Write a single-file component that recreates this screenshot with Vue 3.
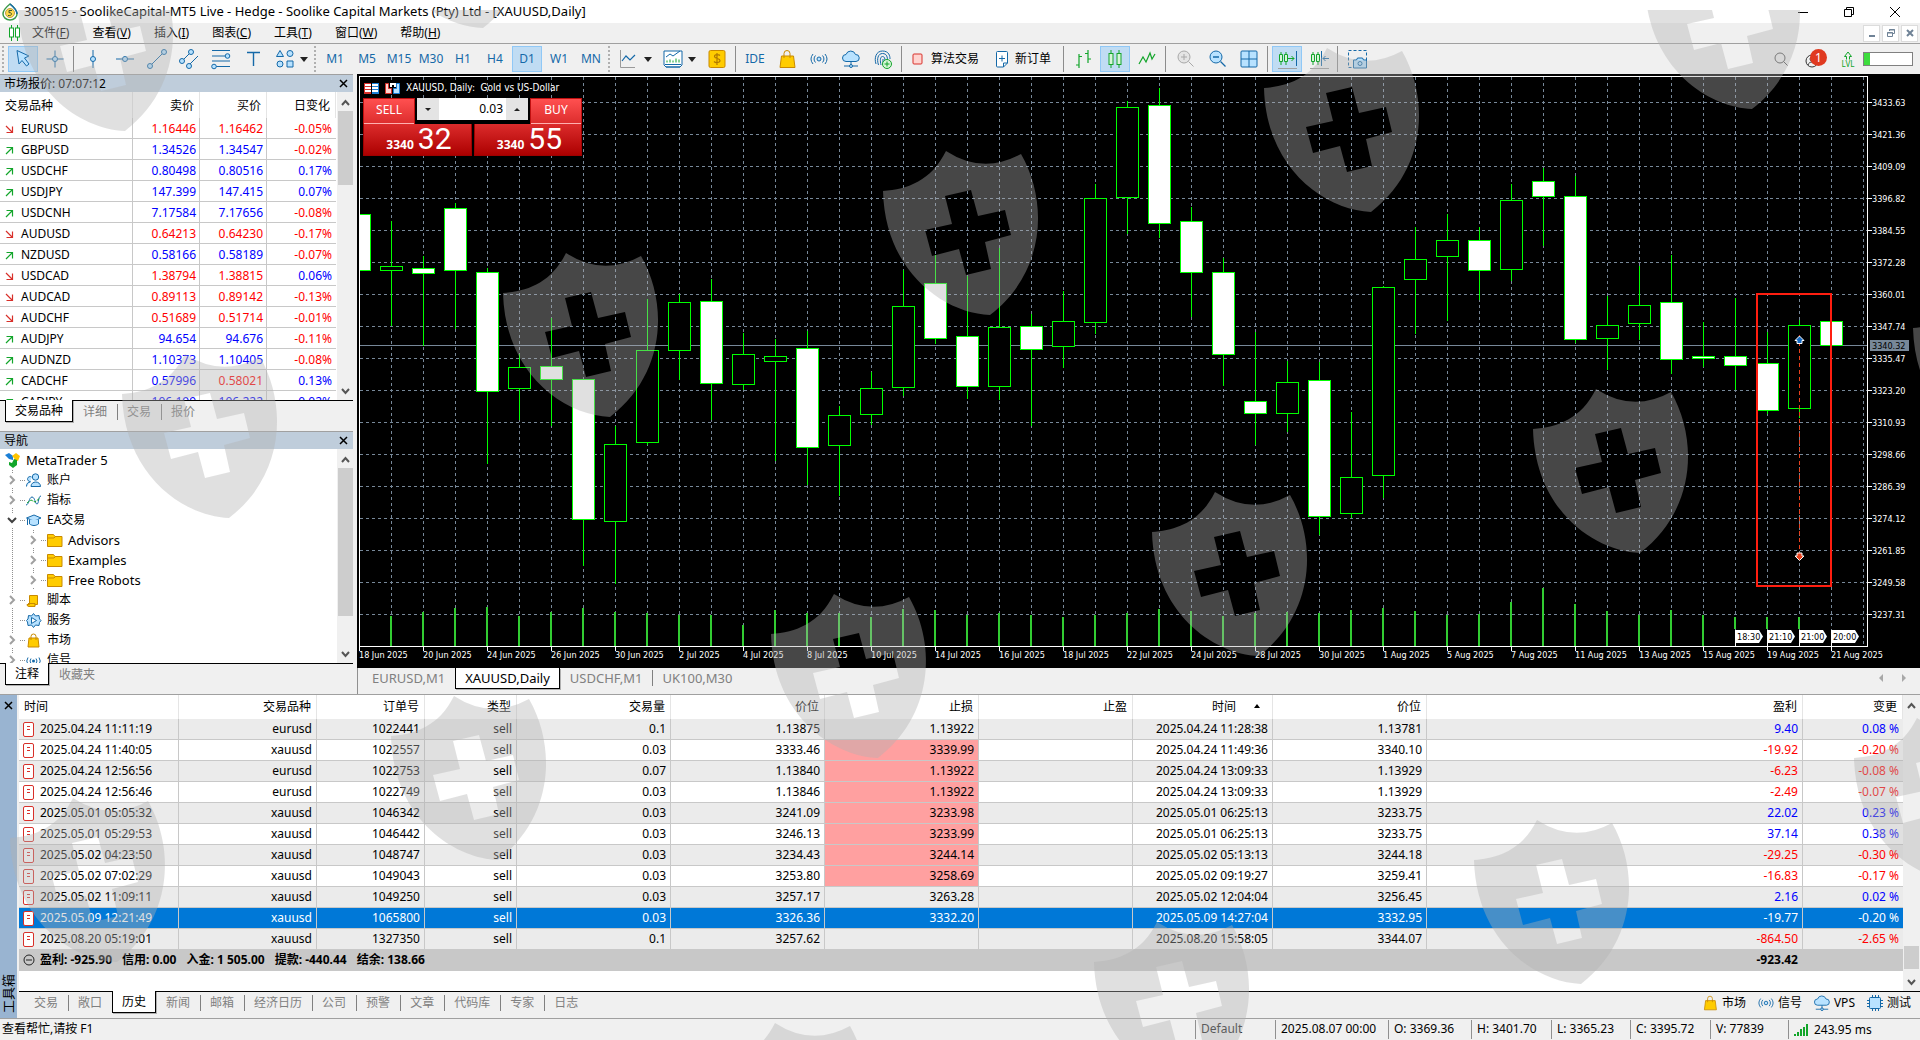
<script setup>
import { ref, computed, onMounted, onBeforeUnmount } from 'vue'

const icons = {
  cursor: '<path d="M9 6.500l12 5.500-4.500 2 4.500 6-2.500 2-4.500-5.500-3 3.500z" fill="#b8e2ff" stroke="#1569a8"/>',
  cross: '<path d="M6.500 15h17M15 6.500v17" stroke="#1569a8"/><circle cx="15" cy="15" r="2.500" fill="#b8e2ff" stroke="#1569a8"/>',
  vline: '<path d="M15 6v18" stroke="#1569a8"/><circle cx="15" cy="15" r="2.500" fill="#b8e2ff" stroke="#1569a8"/>',
  hline: '<path d="M6 15h18" stroke="#1569a8"/><circle cx="15" cy="15" r="2.500" fill="#b8e2ff" stroke="#1569a8"/>',
  trend: '<path d="M8 22L22 8" stroke="#1569a8"/><circle cx="8" cy="22" r="2.500" fill="#b8e2ff" stroke="#1569a8"/><circle cx="22" cy="8" r="2.500" fill="#b8e2ff" stroke="#1569a8"/>',
  channel: '<path d="M8 17l9-9M14 22l10-10" stroke="#1569a8"/><circle cx="8" cy="17" r="2.500" fill="#b8e2ff" stroke="#1569a8"/><circle cx="17" cy="8" r="2.500" fill="#b8e2ff" stroke="#1569a8"/><circle cx="15" cy="22" r="2.500" fill="#b8e2ff" stroke="#1569a8"/>',
  fibo: '<path d="M6 6.500h18M6 12h13M6 17h18M9 22.500h15" stroke="#1569a8"/><circle cx="21.500" cy="12" r="2.300" fill="#b8e2ff" stroke="#1569a8"/><circle cx="8" cy="22.500" r="2.300" fill="#b8e2ff" stroke="#1569a8"/>',
  text: '<path d="M9 8.500h13M15.500 8.500V22" stroke="#1569a8" stroke-width="1.400"/>',
  shapes: '<path d="M6.500 12.500l3.500-6 3.500 6z" fill="#b8e2ff" stroke="#1569a8"/><circle cx="20" cy="9.500" r="3" fill="#b8e2ff" stroke="#1569a8"/><circle cx="10" cy="20" r="3" fill="#b8e2ff" stroke="#1569a8"/><path d="M17 17h6v6h-6z" fill="#b8e2ff" stroke="#1569a8"/>',
  lineChart: '<path d="M6.500 6v17.500H21" stroke="#9a9a9a"/><path d="M8 17l4-5 4 4 5-5" stroke="#1569a8" stroke-width="1.200"/>',
  indicator: '<path d="M6 7h18v14l-2 2H8l-2-2z" fill="#fff" stroke="#1569a8"/><path d="M8 13l4-3 3 2 7-5" stroke="#1569a8"/><path d="M9 18.500v-2M12 18.500v-3M15 18.500v-2M18 18.500v-4M21 18.500v-3" stroke="#12a52a"/><path d="M7 20.500h16M8 23h14" stroke="#1569a8"/>',
  dollar: '<rect x="7" y="6.500" width="16" height="17" rx="1.500" fill="#fc0" stroke="#c98a00"/><path d="M18 11.500c-1-1-5.500-1.500-5.500 1s5.500 1.500 5.500 4-4.500 2.500-6 1M15 9v12" stroke="#b07800" stroke-width="1.200"/>',
  bag: '<path d="M9.500 12h12l1.500 11.500H8z" fill="#fc0" stroke="#c98a00"/><path d="M12 14V9.500a3 3 0 0 1 6 0V14" stroke="#c98a00"/>',
  signal: '<circle cx="15" cy="15" r="2" fill="#b8e2ff" stroke="#1569a8"/><path d="M11.500 11.500a5 5 0 0 0 0 7M18.500 11.500a5 5 0 0 1 0 7M9 10a8 8 0 0 0 0 10M21 10a8 8 0 0 1 0 10" stroke="#1569a8"/>',
  cloud: '<path d="M10 17.500a3.500 3.500 0 0 1 0-7 5 5 0 0 1 9.500 0 3.500 3.500 0 0 1 .500 7z" fill="#b8e2ff" stroke="#1569a8"/><path d="M15 17.500v4M8 22h14" stroke="#1569a8"/><circle cx="15" cy="22" r="1.500" fill="#b8e2ff" stroke="#1569a8"/>',
  finger: '<path d="M8 20c-2-6 0-13 6.500-13S22 12 22 15M10.500 21c-2-6-.500-11.500 4-11.500s5 4 5 7M13 21c-1-4-1-8.500 1.500-8.500 2 0 2.500 2 2.500 4M15 15v6" stroke="#1569a8"/><circle cx="19" cy="20" r="4.500" fill="#d8f5d8" stroke="#12a52a"/><path d="M16.500 20h5M19 17.500v5" stroke="#12a52a"/>',
  bars: '<path d="M11 10v14M8 21h3M11 12.500h3M20 6v13M17 9.500h3M20 15h3" stroke="#12a52a" stroke-width="1.200"/>',
  candles: '<path d="M11 6v18M19 6v18" stroke="#12a52a"/><rect x="9" y="9.500" width="4" height="11" fill="#d8f5d8" stroke="#12a52a"/><rect x="17" y="9.500" width="4" height="11" fill="#d8f5d8" stroke="#12a52a"/>',
  line: '<path d="M7 20l4-7 3 5 4-9 2 6 3-5" stroke="#12a52a" stroke-width="1.200"/>',
  zoomIn: '<circle cx="14" cy="13" r="6" fill="#e4e4e4" stroke="#a8a8a8"/><path d="M18.500 17.500l5 5M11 13h6M14 10v6" stroke="#a8a8a8"/>',
  zoomOut: '<circle cx="14" cy="13" r="6" fill="#b8e2ff" stroke="#1569a8"/><path d="M18.500 17.500l5 5M11 13h6" stroke="#1569a8" stroke-width="1.300"/>',
  grid: '<rect x="7" y="7" width="16" height="16" rx="1" fill="#b8e2ff" stroke="#1569a8"/><path d="M15 7v16M7 15h16" stroke="#1569a8"/>',
  shiftEnd: '<path d="M9 8v13M14 8v13" stroke="#12a52a"/><path d="M7.500 10.500h3v7h-3zM12.500 10.500h3v7h-3z" fill="#d8f5d8" stroke="#12a52a"/><path d="M16 14.500h6M19.500 12l2.500 2.500-2.500 2.500" stroke="#12a52a"/><path d="M24.500 7v15" stroke="#1569a8"/><path d="M6 24.500h19" stroke="#a0a0a0"/>',
  shiftIn: '<path d="M9 8v13M14 8v13" stroke="#12a52a"/><path d="M7.500 10.500h3v7h-3zM12.500 10.500h3v7h-3z" fill="#d8f5d8" stroke="#12a52a"/><path d="M17.500 7v15" stroke="#1569a8"/><path d="M19 14.500h6M21.500 12L19 14.500l2.500 2.500" stroke="#1569a8"/><path d="M6 24.500h19" stroke="#a0a0a0"/>',
  camera: '<path d="M6.500 6.500h18v17h-18z" stroke="#1569a8" stroke-dasharray="3 2"/><path d="M11.500 16h3l1-2h5l1 2h3v8h-13z" fill="#b8e2ff" stroke="#1569a8"/><circle cx="18" cy="19.500" r="2" stroke="#1569a8"/>'
}

const drawTools = ['cross', null, 'vline', 'hline', 'trend', 'channel', 'fibo', 'text']
const timeframes = ['M1', 'M5', 'M15', 'M30', 'H1', 'H4', 'D1', 'W1', 'MN']
const chartTools = ['bars', 'candles', 'line', null, 'zoomIn', 'zoomOut', 'grid', null, 'shiftEnd', 'shiftIn', null, 'camera']
const pressed = ['candles', 'shiftEnd']

const menus = [
  ['文件', 'F'], ['查看', 'V'], ['插入', 'I'], ['图表', 'C'],
  ['工具', 'T'], ['窗口', 'W'], ['帮助', 'H']
]

// symbol, bid, ask, daily change, direction, bid falling, ask falling
const quotes = [
  ['EURUSD', '1.16446', '1.16462', '-0.05%', 0, 1, 1],
  ['GBPUSD', '1.34526', '1.34547', '-0.02%', 1, 0, 0],
  ['USDCHF', '0.80498', '0.80516', '0.17%', 1, 0, 0],
  ['USDJPY', '147.399', '147.415', '0.07%', 1, 0, 0],
  ['USDCNH', '7.17584', '7.17656', '-0.08%', 1, 0, 0],
  ['AUDUSD', '0.64213', '0.64230', '-0.17%', 0, 1, 1],
  ['NZDUSD', '0.58166', '0.58189', '-0.07%', 1, 0, 0],
  ['USDCAD', '1.38794', '1.38815', '0.06%', 0, 1, 1],
  ['AUDCAD', '0.89113', '0.89142', '-0.13%', 0, 1, 1],
  ['AUDCHF', '0.51689', '0.51714', '-0.01%', 0, 1, 1],
  ['AUDJPY', '94.654', '94.676', '-0.11%', 1, 0, 0],
  ['AUDNZD', '1.10373', '1.10405', '-0.08%', 1, 0, 0],
  ['CADCHF', '0.57996', '0.58021', '0.13%', 1, 0, 1],
  ['CADJPY', '106.199', '106.222', '0.02%', 1, 0, 0]
]

const folder = '<path d="M.5 1.500h6l1.500 2h7v10H.5z" fill="#fc0" stroke="#c98a00"/><path d="M1 5h6l1.500-1.500" stroke="#c98a00"/>'
const tree = [
  { t: '账户', i: '<circle cx="9.500" cy="4" r="3.200" fill="#b8e2ff" stroke="#1569a8"/><path d="M5 13.500c0-6 9.500-6 9.500 0zM4.500 8.500a2.500 2.500 0 1 1 1-4.500M.5 13.500c0-3 1.500-4.500 4-4.500" fill="#b8e2ff" stroke="#1569a8"/>', s: 'closed' },
  { t: '指标', i: '<path d="M0 12c3 0 3-8 6-8s3 7 5 7 1-8 4-8" stroke="#1569a8"/><path d="M1 10l4-3 4 2 5-4" stroke="#12a52a" stroke-dasharray="3 1"/>', s: 'closed' },
  { t: 'EA交易', i: '<path d="M.5 5L8 2l7 3-7 3z" fill="#b8e2ff" stroke="#1569a8"/><path d="M3.500 6.500V11c3 2 6 2 9 0V6.500M1.500 6v6" fill="#b8e2ff" stroke="#1569a8"/>', s: 'open' },
  { t: 'Advisors', i: folder, s: 'closed', d: 1 },
  { t: 'Examples', i: folder, s: 'closed', d: 1 },
  { t: 'Free Robots', i: folder, s: 'closed', d: 1 },
  { t: '脚本', i: '<path d="M3.500 2.500h8v9H9v2H3a2 2 0 0 1-2-2h2.500z" fill="#fc0" stroke="#c98a00"/><path d="M2 10.500h7v2" stroke="#c98a00"/>', s: 'closed' },
  { t: '服务', i: '<path d="M7.500.5l2 2.500 3.500-.5.500 3.500 1.500 1.500-1.500 2-.5 3-3.500-.5-2 2.500-2-2.500-3.500.5-.5-3.500L.5 7.500 2 6l.5-3.500L5.500 3z" fill="#b8e2ff" stroke="#1569a8"/><path d="M5.500 4.500l5 3-5 3z" fill="#fff" stroke="#1569a8"/>', s: 'leaf' },
  { t: '市场', i: '<path d="M3 5h9l1 9H2z" fill="#fc0" stroke="#c98a00"/><path d="M5 7V3.500a2.500 2.500 0 0 1 5 0V7" stroke="#c98a00"/>', s: 'closed' },
  { t: '信号', i: '<circle cx="7.500" cy="8" r="1.500" fill="#1569a8"/><path d="M5 5.500a4 4 0 0 0 0 5M10 5.500a4 4 0 0 1 0 5M2 4.500a6 6 0 0 0 0 7M13 4.500a6 6 0 0 1 0 7" stroke="#1569a8"/>', s: 'closed' }
]

const chartTabs = ['EURUSD,M1', 'XAUUSD,Daily', 'USDCHF,M1', 'UK100,M30']

// body top, body bottom, high, low, bearish, volume top
const bars = [
  [214, 270, 214, 270, 1, 0], [266, 270, 221, 326, 0, 616], [268, 273, 256, 346, 1, 612], [208, 270, 203, 329, 1, 608],
  [272, 391, 268, 464, 1, 607], [367, 388, 354, 420, 0, 616], [366, 379, 318, 426, 1, 612], [379, 519, 379, 566, 1, 608],
  [444, 521, 426, 584, 0, 612], [350, 442, 299, 445, 0, 613], [302, 350, 294, 380, 0, 615], [301, 383, 279, 420, 1, 615],
  [354, 384, 333, 390, 0, 625], [356, 361, 339, 461, 0, 610], [348, 447, 331, 485, 1, 613], [415, 445, 406, 496, 0, 613],
  [388, 414, 372, 425, 0, 617], [306, 387, 270, 396, 0, 609], [283, 338, 255, 344, 1, 610], [336, 386, 276, 399, 1, 615],
  [327, 386, 248, 400, 0, 613], [326, 349, 314, 426, 1, 615], [321, 346, 291, 368, 0, 617], [198, 322, 184, 334, 0, 615],
  [107, 197, 101, 234, 0, 613], [105, 223, 88, 238, 1, 609], [221, 272, 207, 317, 1, 611], [272, 354, 258, 386, 1, 616],
  [401, 413, 332, 445, 1, 613], [382, 413, 361, 432, 0, 612], [380, 516, 362, 535, 1, 613], [477, 513, 412, 518, 0, 610],
  [287, 475, 286, 498, 0, 608], [259, 279, 227, 334, 0, 611], [240, 256, 214, 321, 0, 615], [240, 270, 227, 300, 1, 614],
  [200, 269, 184, 281, 0, 602], [181, 196, 168, 246, 1, 588], [196, 339, 176, 343, 1, 604], [325, 338, 296, 370, 0, 611],
  [305, 323, 266, 340, 0, 615], [302, 359, 255, 374, 1, 610], [356, 358, 322, 367, 1, 615], [356, 365, 298, 390, 1, 617],
  [363, 410, 332, 414, 1, 617], [325, 408, 320, 418, 0, 617], [321, 345, 321, 345, 1, 0]
]
const dates = ['18 Jun', '20 Jun', '24 Jun', '26 Jun', '30 Jun', '2 Jul', '4 Jul', '8 Jul', '10 Jul', '14 Jul', '16 Jul', '18 Jul',
  '22 Jul', '24 Jul', '28 Jul', '30 Jul', '1 Aug', '5 Aug', '7 Aug', '11 Aug', '13 Aug', '15 Aug', '19 Aug', '21 Aug']
const prices = Array.from({ length: 17 }, (_, k) => (3433.63 - 12.27 * k).toFixed(2))
const events = ['18:30', '21:10', '21:00', '20:00']

const chartBox = ref(null)
const chartWidth = ref(1563)
const axisX = computed(() => chartWidth.value - 53)
const barX = (k) => chartWidth.value - 89 - 32 * (bars.length - 1 - k)
let observer
onMounted(() => {
  chartWidth.value = chartBox.value.clientWidth
  observer = new ResizeObserver(() => { chartWidth.value = chartBox.value.clientWidth })
  observer.observe(chartBox.value)
})
onBeforeUnmount(() => observer.disconnect())

const columns = ['时间', '交易品种', '订单号', '类型', '交易量', '价位', '止损', '止盈', '时间', '价位', '盈利', '变更']
const deals = [
  ['2025.04.24 11:11:19', 'eurusd', '1022441', 'sell', '0.1', '1.13875', '1.13922', '', '2025.04.24 11:28:38', '1.13781', '9.40', '0.08 %'],
  ['2025.04.24 11:40:05', 'xauusd', '1022557', 'sell', '0.03', '3333.46', '3339.99', '', '2025.04.24 11:49:36', '3340.10', '-19.92', '-0.20 %', 1],
  ['2025.04.24 12:56:56', 'eurusd', '1022753', 'sell', '0.07', '1.13840', '1.13922', '', '2025.04.24 13:09:33', '1.13929', '-6.23', '-0.08 %', 1],
  ['2025.04.24 12:56:46', 'eurusd', '1022749', 'sell', '0.03', '1.13846', '1.13922', '', '2025.04.24 13:09:33', '1.13929', '-2.49', '-0.07 %', 1],
  ['2025.05.01 05:05:32', 'xauusd', '1046342', 'sell', '0.03', '3241.09', '3233.98', '', '2025.05.01 06:25:13', '3233.75', '22.02', '0.23 %', 1],
  ['2025.05.01 05:29:53', 'xauusd', '1046442', 'sell', '0.03', '3246.13', '3233.99', '', '2025.05.01 06:25:13', '3233.75', '37.14', '0.38 %', 1],
  ['2025.05.02 04:23:50', 'xauusd', '1048747', 'sell', '0.03', '3234.43', '3244.14', '', '2025.05.02 05:13:13', '3244.18', '-29.25', '-0.30 %', 1],
  ['2025.05.02 07:02:29', 'xauusd', '1049043', 'sell', '0.03', '3253.80', '3258.69', '', '2025.05.02 09:19:27', '3259.41', '-16.83', '-0.17 %', 1],
  ['2025.05.02 11:09:11', 'xauusd', '1049250', 'sell', '0.03', '3257.17', '3263.28', '', '2025.05.02 12:04:04', '3256.45', '2.16', '0.02 %'],
  ['2025.05.09 12:21:49', 'xauusd', '1065800', 'sell', '0.03', '3326.36', '3332.20', '', '2025.05.09 14:27:04', '3332.95', '-19.77', '-0.20 %'],
  ['2025.08.20 05:19:01', 'xauusd', '1327350', 'sell', '0.1', '3257.62', '', '', '2025.08.20 15:58:05', '3344.07', '-864.50', '-2.65 %']
]
const selectedDeal = 9
const toolTabs = ['交易', '敞口', '历史', '新闻', '邮箱', '经济日历', '公司', '预警', '文章', '代码库', '专家', '日志']
const statusCells = ['2025.08.07 00:00', 'O: 3369.36', 'H: 3401.70', 'L: 3365.23', 'C: 3395.72', 'V: 77839']

const shields = [
  [18, -33], [376, -136], [1645, -55], [503, 253], [883, 151], [1264, 48], [1533, 389], [1152, 492], [771, 594],
  [122, 354], [391, 696], [10, 798], [1474, 820], [1854, 718], [1094, 922], [712, 1023], [1913, 288]
]
</script>

<template>
  <div class="app">
    <header class="title-bar">
      <svg class="logo" width="16" height="18" fill="none">
        <path d="M8 1c5 4 7 8 7 10 0 3-3 6-7 6s-7-3-7-6c0-2 2-6 7-10z" fill="#fff" stroke="#3b9a4a" stroke-width="1.500" />
        <path d="M8 1c5 4 7 8 7 10" stroke="#1569a8" stroke-width="1.500" />
        <circle cx="8" cy="10" r="4.500" fill="#ffd84a" stroke="#b9a04a" />
        <path d="M10 7.500H7v2.200c3-.700 3.500 2.800.500 2.800H6" stroke="#3d5a30" />
      </svg>
      <h1>300515 - SoolikeCapital-MT5 Live - Hedge - Soolike Capital Markets (Pty) Ltd - [XAUUSD,Daily]</h1>
      <div class="window-buttons">
        <button aria-label="最小化"><svg width="12" height="12"><path d="M1 6.500h10" stroke="#000" /></svg></button>
        <button aria-label="还原"><svg width="12" height="12" fill="none" stroke="#000"><path d="M1.500 3.500h7v7h-7zM3.500 3.500v-2h7v7h-2" /></svg></button>
        <button aria-label="关闭"><svg width="12" height="12" stroke="#000"><path d="M1 1l10 10M11 1L1 11" /></svg></button>
      </div>
    </header>

    <nav class="menu-bar">
      <svg class="menu-icon" width="12" height="16" fill="#fff" stroke="#12a52a">
        <path d="M3.500 0v16M9.500 0v16" /><rect x="1.500" y="3" width="4" height="9" /><rect x="7.500" y="3" width="4" height="9" />
      </svg>
      <button v-for="m in menus" :key="m[1]">{{ m[0] }}(<u>{{ m[1] }}</u>)</button>
      <div class="mdi-buttons">
        <button aria-label="最小化图表"><svg width="12" height="12"><path d="M3 9h6" stroke="#6f8296" stroke-width="2" /></svg></button>
        <button aria-label="还原图表"><svg width="12" height="12" fill="none" stroke="#6f8296"><path d="M2.500 5.500h5v4h-5zM2 6h6M4.500 4V2.500h5v4H8M4 3h6" /></svg></button>
        <button aria-label="关闭图表"><svg width="12" height="12" stroke="#6f8296" stroke-width="2"><path d="M3 3l6 6M9 3l-6 6" /></svg></button>
      </div>
    </nav>

    <div class="toolbar">
      <i class="grip"></i>
      <button class="tool on" aria-label="光标"><svg width="30" height="30" fill="none" v-html="icons.cursor"></svg></button>
      <template v-for="(t, k) in drawTools" :key="k">
        <button v-if="t" class="tool" :aria-label="t"><svg width="30" height="30" fill="none" v-html="icons[t]"></svg></button>
        <i v-else class="sep"></i>
      </template>
      <button class="tool drop" aria-label="图形"><svg width="30" height="30" fill="none" v-html="icons.shapes"></svg><i class="caret"></i></button>
      <i class="grip"></i>
      <button v-for="t in timeframes" :key="t" class="tool" :class="{ on: t === 'D1' }">{{ t }}</button>
      <i class="grip"></i>
      <button class="tool drop" aria-label="图表类型"><svg width="30" height="30" fill="none" v-html="icons.lineChart"></svg><i class="caret"></i></button>
      <button class="tool drop" aria-label="指标"><svg width="30" height="30" fill="none" v-html="icons.indicator"></svg><i class="caret"></i></button>
      <button class="tool" aria-label="账户"><svg width="30" height="30" fill="none" v-html="icons.dollar"></svg></button>
      <i class="sep"></i>
      <button class="tool">IDE</button>
      <button v-for="t in ['bag', 'signal', 'cloud', 'finger']" :key="t" class="tool" :aria-label="t"><svg width="30" height="30" fill="none" v-html="icons[t]"></svg></button>
      <i class="sep"></i>
      <button class="tool label algo">
        <svg width="12" height="14"><rect x="1" y="2" width="9" height="10" rx="1" fill="#ffd4d0" stroke="#d8302a" /></svg>算法交易
      </button>
      <button class="tool label order">
        <svg width="14" height="18" fill="#fff" stroke="#1569a8"><path d="M1.500 2.500a1 1 0 0 1 1-1h9a1 1 0 0 1 1 1V13l-4 4h-6a1 1 0 0 1-1-1zM8.500 17v-4h4M4 8.500h6M7 5.500v6" /></svg>新订单
      </button>
      <i class="sep"></i>
      <template v-for="(t, k) in chartTools" :key="k">
        <button v-if="t" class="tool" :class="{ on: pressed.includes(t) }" :aria-label="t"><svg width="30" height="30" fill="none" v-html="icons[t]"></svg></button>
        <i v-else class="sep"></i>
      </template>
      <div class="toolbar-right">
        <button class="plain" aria-label="搜索"><svg width="14" height="14" fill="none" stroke="#555"><circle cx="6" cy="6" r="5" /><path d="M9.500 9.500l4 4" /></svg></button>
        <button class="plain account" aria-label="账户">
          <svg width="24" height="20" fill="none"><circle cx="8" cy="12" r="6" stroke="#333" /><circle cx="8" cy="10" r="2" stroke="#333" /><path d="M4 16c1-4 7-4 8 0" stroke="#333" /></svg>
          <span class="badge">1</span>
        </button>
        <button class="plain lvl" aria-label="等级">
          <svg width="12" height="9" fill="none" stroke="#12a52a"><path d="M4.500 8.500v-3H2.500L6 1l3.500 4.500h-2v3" /></svg>LVL
        </button>
        <div class="battery"><span></span></div>
      </div>
    </div>

    <main class="work">
      <aside class="side">
        <section class="panel market">
          <header class="panel-title">市场报价: 07:07:12<button aria-label="关闭市场报价">
            <svg width="9" height="9" stroke="#000" stroke-width="1.500"><path d="M1 1l7 7M8 1L1 8" /></svg></button></header>
          <div class="scroll-area">
            <table class="quotes">
              <colgroup><col><col class="c67"><col class="c67"><col class="c69"></colgroup>
              <thead><tr><th>交易品种</th><th>卖价</th><th>买价</th><th>日变化</th></tr></thead>
              <tbody>
                <tr v-for="q in quotes" :key="q[0]">
                  <td>
                    <svg v-if="q[4]" width="9" height="9" fill="none" stroke="#12a52a" stroke-width="1.200"><path d="M1 8l6.500-6.500M1.500 1.500h6v6" /></svg>
                    <svg v-else width="9" height="9" fill="none" stroke="#d8302a" stroke-width="1.200"><path d="M1 1l6.500 6.500M1.500 7.500h6v-6" /></svg>{{ q[0] }}
                  </td>
                  <td :class="q[5] ? 'red' : 'blue'">{{ q[1] }}</td>
                  <td :class="q[6] ? 'red' : 'blue'">{{ q[2] }}</td>
                  <td :class="q[3][0] === '-' ? 'red' : 'blue'">{{ q[3] }}</td>
                </tr>
              </tbody>
            </table>
            <div class="scrollbar">
              <svg width="11" height="8" fill="none" stroke="#555" stroke-width="2"><path d="M2 6l3.500-4L9 6" /></svg>
              <span class="thumb thumb-quotes"></span>
              <svg class="down" width="11" height="8" fill="none" stroke="#555" stroke-width="2"><path d="M2 2l3.500 4L9 2" /></svg>
            </div>
          </div>
          <div class="tabs"><button class="active">交易品种</button><button>详细</button><button>交易</button><button>报价</button></div>
        </section>

        <section class="panel navigator">
          <header class="panel-title">导航<button aria-label="关闭导航">
            <svg width="9" height="9" stroke="#000" stroke-width="1.500"><path d="M1 1l7 7M8 1L1 8" /></svg></button></header>
          <div class="scroll-area">
            <ul class="tree">
              <li class="root">
                <svg width="15" height="15"><path d="M0 2l4-2 4 3v4L4 6z" fill="#1b7fd6" /><path d="M7 3l4-3 4 3-2 5-3-1-1-2z" fill="#ffc400" /><path d="M9 6l3 1v5l-4 3-4-3V9l3 1z" fill="#12a52a" /></svg>MetaTrader 5
              </li>
              <li v-for="n in tree" :key="n.t" :class="{ child: n.d }">
                <i v-if="n.d" class="rail"></i>
                <span class="toggle">
                  <svg v-if="n.s === 'closed'" width="10" height="10" fill="none" stroke="#a0a0a0" stroke-width="2"><path d="M3 1l4 4-4 4" /></svg>
                  <svg v-if="n.s === 'open'" width="10" height="10" fill="none" stroke="#404040" stroke-width="2"><path d="M1 3l4 4 4-4" /></svg>
                </span>
                <i class="dots"></i>
                <svg width="16" height="15" fill="none" v-html="n.i"></svg>{{ n.t }}
              </li>
            </ul>
            <div class="scrollbar">
              <svg width="11" height="8" fill="none" stroke="#555" stroke-width="2"><path d="M2 6l3.500-4L9 6" /></svg>
              <span class="thumb thumb-tree"></span>
              <svg class="down" width="11" height="8" fill="none" stroke="#555" stroke-width="2"><path d="M2 2l3.500 4L9 2" /></svg>
            </div>
          </div>
          <div class="tabs"><button class="active">注释</button><button>收藏夹</button></div>
        </section>
      </aside>

      <section class="chart-column">
        <div ref="chartBox" class="chart">
          <svg class="plot" height="594">
            <g transform="translate(0 -74)" shape-rendering="crispEdges">
              <g class="grid">
                <line v-for="(p, k) in prices" :key="p" x1="3" :x2="axisX" :y1="102.5 + 32 * k" :y2="102.5 + 32 * k" />
                <line v-for="k in bars.length" :key="k" :x1="barX(k) + .5" :x2="barX(k) + .5" y1="77" y2="646" />
              </g>
              <line x1="2" :x2="axisX" y1="345.5" y2="345.5" stroke="#778899" />
              <g v-for="(b, k) in bars" :key="k">
                <rect v-if="b[5]" class="volume" :x="barX(k) - 1" :y="b[5]" width="2" :height="(k > 42 ? 629 : 646) - b[5]" />
                <line class="wick" :x1="barX(k) + .5" :x2="barX(k) + .5" :y1="b[2]" :y2="b[3]" />
                <rect class="body" :class="{ bear: b[4] }" :x="barX(k) - 10.5" :y="b[0] + .5" width="22" :height="b[1] - b[0]" />
              </g>
              <rect x="0" y="74" width="2" height="594" fill="#000" />
              <path class="frame" :d="`M2.500 646V76.500H${axisX + .5}V646.500H2.500`" />
              <g v-for="(p, k) in prices" :key="'p' + p">
                <line class="tick" :x1="axisX" :x2="axisX + 5" :y1="102.5 + 32 * k" :y2="102.5 + 32 * k" />
              </g>
              <line v-for="(d, k) in dates" :key="d" class="tick" :x1="barX(2 * k) + .5" :x2="barX(2 * k) + .5" y1="646" y2="651" />
            </g>
            <g transform="translate(0 -74)">
              <text v-for="(p, k) in prices" :key="p" :x="axisX + 5" :y="106 + 32 * k">{{ p }}</text>
              <text v-for="(d, k) in dates" :key="d" :x="barX(2 * k)" y="658">{{ d }} 2025</text>
              <rect :x="axisX + 3" y="340" width="39" height="11" fill="#778899" />
              <text class="dark" :x="axisX + 5" y="349">3340.32</text>
              <g v-for="(e, k) in events" :key="e">
                <path :d="`M${barX(43 + k)} 630h24l4 6.500-4 6.500h-23v4h-1z`" fill="#fff" />
                <text class="dark" :x="barX(43 + k) + 2" y="640">{{ e }}</text>
              </g>
              <rect :x="barX(46) - 74" y="294" width="74" height="292" fill="none" stroke="#ff1e10" stroke-width="2" />
              <line :x1="barX(45) + .5" :x2="barX(45) + .5" y1="335" y2="556" stroke="#e8401c" stroke-dasharray="4 3" />
              <path :d="`M${barX(45) + .5} 336l4.500 4.500h-2v3h-5v-3h-2z`" fill="#1569c0" stroke="#fff" />
              <path :d="`M${barX(45) + .5} 560.500l-4.500-4.500h2v-3h5v3h2z`" fill="#e8401c" stroke="#fff" />
            </g>
          </svg>
          <div class="overlay">
            <div class="chart-title">
              <svg width="15" height="11"><path d="M0 0h7v11H0z" fill="#d8302a" /><path d="M8 0h7v11H8z" fill="#1b7fd6" /><path d="M1 2h6M1 5h6M1 8h6M8 2h6M8 5h6M8 8h6" stroke="#fff" stroke-width="2" /></svg>
              <svg width="15" height="11"><path d="M.5.500h3v5h3v5h-6z" fill="#ffd4d0" stroke="#d8302a" /><path d="M14.500.500h-3v5h-3v5h6z" fill="#b8e2ff" stroke="#1b7fd6" /><path d="M5 0h6v4H9V2H7v2H5z" fill="#fff" /></svg>
              <span>XAUUSD, Daily:&nbsp; Gold vs US-Dollar</span>
            </div>
            <div class="one-click">
              <button class="side-button">SELL</button>
              <div class="stepper">
                <button aria-label="减少"><i class="caret small"></i></button>
                <input aria-label="交易量" value="0.03">
                <button aria-label="增加"><i class="caret small up"></i></button>
              </div>
              <button class="side-button">BUY</button>
            </div>
            <div class="quote-row">
              <div><b>3340</b><span>32</span></div>
              <div><b>3340</b><span>55</span></div>
            </div>
          </div>
        </div>
        <div class="tabs chart-tabs">
          <button v-for="t in chartTabs" :key="t" :class="{ active: t === 'XAUUSD,Daily' }">{{ t }}</button>
          <div class="tab-arrows">
            <svg width="6" height="8" fill="#a8a8a8"><path d="M5 0v8L1 4z" /></svg>
            <svg width="6" height="8" fill="#a8a8a8"><path d="M1 0v8l4-4z" /></svg>
          </div>
        </div>
      </section>
    </main>

    <section class="toolbox">
      <div class="strip">
        <button aria-label="关闭工具箱"><svg width="9" height="9" stroke="#000" stroke-width="1.500"><path d="M1 1l7 7M8 1L1 8" /></svg></button>
        <span>工具箱</span>
      </div>
      <div class="toolbox-main">
        <div class="deals-area">
          <table class="deals">
            <colgroup>
              <col class="w160"><col class="w138"><col class="w108"><col class="w92"><col class="w154"><col class="w154">
              <col class="w154"><col class="w154"><col class="w140"><col class="w154"><col><col class="w100">
            </colgroup>
            <thead><tr><th v-for="(c, k) in columns" :key="k" :class="{ sorted: k === 8 }">{{ c }}</th></tr></thead>
            <tbody>
              <tr v-for="(d, r) in deals" :key="r" :class="{ selected: r === selectedDeal }">
                <td v-for="k in 12" :key="k" :class="{ stop: k === 7 && d[12], red: k > 10 && d[k - 1][0] === '-', blue: k > 10 && d[k - 1][0] !== '-' }">
                  <svg v-if="k === 1" width="11" height="15" fill="#fff" stroke="#d8302a"><rect x=".5" y=".5" width="10" height="14" rx="1.500" /><path d="M4 4.500h3M4 7.500h3" /></svg>{{ d[k - 1] }}
                </td>
              </tr>
            </tbody>
            <tfoot>
              <tr>
                <td colspan="10">
                  <svg width="12" height="12" fill="none" stroke="#222"><circle cx="6" cy="6" r="5" /><path d="M3 6h6" /></svg><span>盈利: -925.90</span><span>信用: 0.00</span><span>入金: 1 505.00</span><span>提款: -440.44</span><span>结余: 138.66</span>
                </td>
                <td>-923.42</td><td></td>
              </tr>
            </tfoot>
          </table>
          <div class="scrollbar wide">
            <svg width="11" height="8" fill="none" stroke="#555" stroke-width="2"><path d="M2 6l3.500-4L9 6" /></svg>
            <span class="thumb thumb-deals"></span>
            <svg class="down" width="11" height="8" fill="none" stroke="#555" stroke-width="2"><path d="M2 2l3.500 4L9 2" /></svg>
          </div>
        </div>
        <div class="tabs tool-tabs">
          <button v-for="t in toolTabs" :key="t" :class="{ active: t === '历史' }">{{ t }}</button>
          <div class="links">
            <a href="#market"><svg width="16" height="16" viewBox="5 5 20 20" fill="none" v-html="icons.bag"></svg>市场</a>
            <a href="#signals"><svg width="16" height="16" viewBox="6 6 18 18" fill="none" v-html="icons.signal"></svg>信号</a>
            <a href="#vps"><svg width="16" height="16" viewBox="6 6 18 18" fill="none" v-html="icons.cloud"></svg>VPS</a>
            <a href="#tester"><svg width="16" height="16" fill="#b8e2ff" stroke="#1569a8"><path d="M5.500 0v16M8.500 0v16M11.500 0v16M0 5.500h16M0 8.500h16M0 11.500h16" /><rect x="2.500" y="2.500" width="11" height="11" rx="1" /></svg>测试</a>
          </div>
        </div>
      </div>
    </section>

    <footer class="status">
      <span class="hint">查看帮忙,请按 F1</span>
      <span class="cell profile">Default</span>
      <span v-for="(s, k) in statusCells" :key="s" class="cell" :class="'s' + k">{{ s }}</span>
      <span class="cell ping">
        <svg width="14" height="12" stroke="#12a52a" stroke-width="2"><path d="M1 12v-2M4 12V8M7 12V5M10 12V3M13 12V0" /></svg>243.95 ms
      </span>
    </footer>

    <svg class="watermark" aria-hidden="true">
      <defs>
        <path id="shield" fill-rule="evenodd" d="M63 0Q100 24 138 3C166 52 162 122 107 164 60 162 2 120 0 40 25 38 48 30 63 0zM62 45l7 28-27 6 7 26 27-7 7 26 25-6-6-27 26-7-6-25-27 6-7-26z" />
      </defs>
      <use v-for="(s, k) in shields" :key="k" href="#shield" :x="s[0]" :y="s[1] - 10" />
    </svg>
  </div>
</template>

<style>
body { background: #f0f0f0; }
</style>

<style scoped>
.app {
  position: relative;
  display: flex;
  flex-direction: column;
  height: 100vh;
  min-height: 900px;
  overflow: hidden;
  background: #f0f0f0;
  color: #000;
  font: 12px/20px "Noto Sans", "Noto Sans CJK SC", sans-serif;
}
* { box-sizing: border-box; }
svg { display: block; flex: none; }
button {
  margin: 0;
  padding: 0;
  border: 0;
  background: none;
  color: inherit;
  font: inherit;
  white-space: nowrap;
}
.red { color: #f00; }
.blue { color: #00f; }

.title-bar { display: flex; align-items: center; flex: none; height: 23px; padding-left: 2px; background: #fff; }
.title-bar h1 { margin: 0 0 2px 6px; font-size: 13px; font-weight: 400; line-height: 18px; white-space: nowrap; }
.window-buttons { display: flex; margin-left: auto; padding-right: 2px; }
.window-buttons button { display: grid; place-items: center; width: 46px; height: 20px; }

.menu-bar { display: flex; align-items: center; gap: 1px; flex: none; height: 21px; padding: 0 2px 0 8px; border-bottom: 1px solid #a0a0a0; }
.menu-bar > button { padding: 0 11px; }
.mdi-buttons { display: flex; gap: 2px; margin-left: auto; }
.mdi-buttons button { display: grid; place-items: center; width: 17px; height: 17px; border: 1px solid #dcdcdc; background: #fff; }

.toolbar { display: flex; align-items: center; gap: 2px; flex: none; height: 30px; padding: 0 7px 0 2px; color: #1569a8; }
.tool { display: flex; align-items: center; justify-content: center; flex: none; width: 30px; height: 26px; }
.tool.on { background: #c0dcf3; box-shadow: inset 0 0 0 1px #90c8f6; }
.tool.drop { justify-content: flex-start; width: 42px; }
.tool.label { justify-content: flex-start; color: #000; }
.algo { width: 82px; gap: 7px; padding-left: 6px; }
.order { width: 70px; gap: 6px; padding-left: 5px; }
.caret { border: 4px solid transparent; border-top: 5px solid #222; border-bottom: 0; }
.caret.small { border-width: 3px; border-top-width: 3px; border-bottom: 0; }
.caret.small.up { border-top: 0; border-bottom: 3px solid #222; }
.grip { flex: none; width: 4px; height: 26px; background: repeating-linear-gradient(#b0b0b0 0 2px, transparent 2px 4px) 0 0 / 2px 100% no-repeat; }
.sep { flex: none; width: 4px; height: 26px; background: linear-gradient(#8c8c8c, #8c8c8c) 1px 0 / 1px 100% no-repeat; }
.toolbar-right { display: flex; align-items: center; margin-left: auto; }
.plain { display: block; }
.account { position: relative; margin-left: 16px; }
.badge { position: absolute; top: 0; right: 1px; width: 17px; height: 17px; border-radius: 9px; background: #e03a20; color: #fff; line-height: 17px; text-align: center; }
.lvl { display: flex; flex-direction: column; align-items: center; width: 20px; margin-left: 10px; color: #12a52a; font-size: 8px; line-height: 8px; }
.battery { width: 50px; height: 14px; margin-left: 5px; border: 1px solid #808080; background: #fff; }
.battery span { display: block; width: 6px; height: 12px; background: #3ddc3d; }

.work { display: flex; gap: 4px; flex: 1 1 0; min-height: 0; }
.side { display: flex; flex-direction: column; flex: none; width: 353px; }
.panel { display: flex; flex-direction: column; min-height: 0; }
.market { flex: 357 1 0; }
.navigator { flex: 263 1 0; }
.panel-title { display: flex; align-items: center; justify-content: space-between; flex: none; height: 18px; padding: 0 5px 0 4px; border-top: 1px solid #a0a0a0; background: #bfcddb; }
.scroll-area { display: flex; flex: 1 1 0; min-height: 0; overflow: hidden; background: #fff; }
.scrollbar { display: flex; flex-direction: column; align-items: center; flex: none; width: 16px; margin-left: 1px; padding: 7px 0 5px; background: #f0f0f0; }
.scrollbar .down { margin-top: auto; }
.thumb { width: 15px; background: #cdcdcd; }
.thumb-quotes { height: 74px; margin-top: 4px; }
.thumb-tree { height: 148px; margin-top: 4px; }
.scrollbar.wide { width: 17px; margin-left: 0; }
.thumb-deals { height: 23px; margin-top: 236px; }

table { width: 100%; border-collapse: separate; border-spacing: 0; table-layout: fixed; }
.quotes { flex: 1; align-self: flex-start; }
.c67 { width: 67px; }
.c69 { width: 69px; }
th { font-weight: 400; text-align: right; white-space: nowrap; }
td { padding: 0 4px; border-right: 1px solid #c8c8c8; border-bottom: 1px solid #c8c8c8; line-height: 20px; text-align: right; white-space: nowrap; }
th { border-right: 1px solid #e5e5e5; }
.quotes th { height: 26px; padding: 2px 5px 0; }
.quotes td { padding: 2px 3px 0; line-height: 18px; }
.quotes th:first-child { text-align: left; }
.quotes td:first-child { display: flex; align-items: center; gap: 7px; padding-left: 5px; }
.quotes td:last-child { padding-right: 4px; border-right: 0; }

.tabs { display: flex; align-items: flex-start; flex: none; height: 31px; padding-left: 5px; border-top: 1px solid #000; color: #808080; }
.tabs button { height: 16px; margin-top: 3px; padding: 0 10px; line-height: 14px; }
.tabs button:not(.active) + button:not(.active) { padding-left: 9px; border-left: 1px solid #808080; }
.tabs .active { height: 22px; margin-top: -1px; padding: 0 9px; border: 1px solid #000; border-top: 0; background: #fff; box-shadow: 1px 1px 0 #b0b0b0; color: #000; line-height: 20px; }

.tree { flex: 1; margin: 0; padding: 1px 0 0 5px; list-style: none; }
.tree li { display: flex; align-items: center; height: 20px; white-space: nowrap; }
.tree li > svg { margin-right: 5px; }
.tree .root, .tree .child { font-size: 13px; }
.tree li.root > svg { margin-right: 6px; }
.toggle { display: grid; place-items: center; width: 14px; height: 20px; background: repeating-linear-gradient(#909090 0 1px, transparent 1px 2px) 7px 0 / 1px 100% no-repeat; }
.toggle svg { width: 12px; height: 14px; padding: 2px 1px; background: #fff; }
.rail { width: 21px; height: 20px; background: repeating-linear-gradient(#909090 0 1px, transparent 1px 2px) 7px 0 / 1px 100% no-repeat; }
.dots { width: 7px; height: 1px; background: repeating-linear-gradient(90deg, transparent 0 1px, #909090 1px 2px); }

.chart-column { display: flex; flex-direction: column; flex: 1; min-width: 0; }
.chart { position: relative; flex: 1; min-height: 0; overflow: hidden; background: #000; }
.plot { width: 100%; font: 9px "DejaVu Sans Condensed", "DejaVu Sans", sans-serif; fill: #fff; }
.grid line { stroke: #778899; stroke-dasharray: 3 3; }
.volume { fill: #32cd32; }
.wick { stroke: #0f0; }
.body { fill: #000; stroke: #0f0; }
.bear { fill: #fff; }
.frame { fill: none; stroke: #fff; }
.tick { stroke: #fff; }
.dark { fill: #000; }
.overlay { position: absolute; top: 5px; left: 6px; color: #fff; }
.chart-title { display: flex; align-items: center; gap: 6px; height: 18px; padding-left: 1px; }
.chart-title span { font: 10px/18px "DejaVu Sans Condensed", "DejaVu Sans", sans-serif; white-space: nowrap; }
.one-click { display: flex; gap: 2px; width: 219px; height: 26px; margin-top: 1px; background: #000; }
.side-button { width: 52px; border: 1px solid #c01010; border-bottom: 0; background: linear-gradient(#ff5050, #dc2c2c); box-shadow: inset 0 -1px 0 #ffb0b0; line-height: 20px; padding-bottom: 3px; }
.stepper { display: flex; width: 111px; height: 22px; }
.stepper button { display: grid; place-items: center; flex: none; width: 22px; background: #e4e4e4; }
.stepper input { width: 67px; min-width: 0; padding: 0 3px; border: 0; background: #fff; font: inherit; text-align: right; }
.quote-row { display: flex; gap: 2px; width: 219px; background: #000; }
.quote-row div { display: flex; align-items: baseline; justify-content: flex-end; gap: 4px; flex: 1; height: 32px; padding-right: 19px; border: 1px solid #a00000; border-top: 0; background: linear-gradient(#dc2c2c, #ac0000); line-height: 30px; }
.quote-row b { font-size: 12px; }
.quote-row span { font-family: Roboto, "Noto Sans", sans-serif; font-size: 30px; }
.chart-tabs { height: 26px; padding-left: 4px; border-top: 0; border-left: 1px solid #909090; font-size: 13px; }
.chart-tabs button { margin-top: 2px; }
.chart-tabs .active { height: 21px; margin-top: 0; line-height: 18px; }
.tab-arrows { display: flex; gap: 17px; margin: 6px 13px 0 auto; }

.toolbox { display: flex; flex: none; border-top: 1px solid #a0a0a0; }
.strip { display: flex; flex-direction: column; align-items: center; justify-content: space-between; width: 17px; margin-right: 2px; padding: 6px 0 5px; background: #99b4d1; }
.strip span { font-size: 13px; line-height: 17px; writing-mode: vertical-rl; transform: rotate(180deg); text-orientation: sideways; }
.toolbox-main { flex: 1; min-width: 0; }
.deals-area { display: flex; height: 296px; background: #fff; }
.deals { flex: 1; align-self: flex-start; }
.deals th { height: 24px; padding: 0 5px; }
.deals th:first-child, .deals td:first-child { text-align: left; }
.deals td:first-child { display: flex; align-items: center; gap: 6px; padding-left: 4px; }
.deals tbody tr:nth-child(odd) { background: #ebebeb; }
.deals tbody .selected, .deals tbody .selected td { background: #0078d7; color: #fff; }
.deals .stop { background: #ffa0a0; }
.deals td:last-child { border-right: 0; }
.deals tfoot td { height: 21px; border-color: #c8c8c8; background: #c8c8c8; font-weight: 700; }
.deals tfoot td:first-child { display: table-cell; }
.deals tfoot svg { display: inline-block; margin-right: 5px; vertical-align: -2px; }
.deals tfoot span { margin-right: 10px; }
.sorted::after { content: ""; display: inline-block; margin: 0 7px 3px 18px; border: 3px solid transparent; border-top: 0; border-bottom: 4px solid #000; }
.w92 { width: 92px; }
.w100 { width: 100px; }
.w108 { width: 108px; }
.w138 { width: 138px; }
.w140 { width: 140px; }
.w154 { width: 154px; }
.w160 { width: 160px; }
.tool-tabs { height: 27px; }
.links { display: flex; gap: 12px; margin: 1px 9px 0 auto; }
.links a { display: flex; align-items: center; gap: 4px; color: #000; text-decoration: none; }

.status { display: flex; flex: none; height: 22px; border-top: 1px solid #a0a0a0; white-space: nowrap; }
.hint { flex: 1; padding-left: 2px; line-height: 19px; }
.cell { flex: none; height: 19px; margin-top: 1px; padding-left: 5px; border-left: 1px solid #909090; line-height: 17px; }
.profile { width: 80px; color: #222; }
.s0 { width: 113px; }
.s1 { width: 83px; }
.s2, .s4 { width: 80px; }
.s3 { width: 79px; }
.s5 { width: 78px; }
.ping { display: flex; align-items: center; gap: 6px; width: 132px; }

.watermark { position: absolute; inset: 10px 0 0; width: 100%; height: 100%; fill: #b2b2b2; fill-opacity: .4; pointer-events: none; }
</style>
